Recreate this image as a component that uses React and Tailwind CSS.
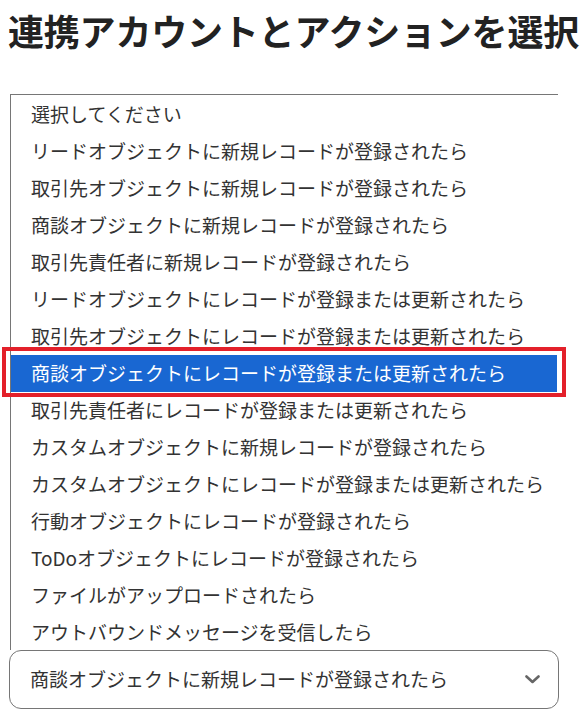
import React from 'react';

const options = [
  '選択してください',
  'リードオブジェクトに新規レコードが登録されたら',
  '取引先オブジェクトに新規レコードが登録されたら',
  '商談オブジェクトに新規レコードが登録されたら',
  '取引先責任者に新規レコードが登録されたら',
  'リードオブジェクトにレコードが登録または更新されたら',
  '取引先オブジェクトにレコードが登録または更新されたら',
  '商談オブジェクトにレコードが登録または更新されたら',
  '取引先責任者にレコードが登録または更新されたら',
  'カスタムオブジェクトに新規レコードが登録されたら',
  'カスタムオブジェクトにレコードが登録または更新されたら',
  '行動オブジェクトにレコードが登録されたら',
  'ToDoオブジェクトにレコードが登録されたら',
  'ファイルがアップロードされたら',
  'アウトバウンドメッセージを受信したら',
];

const SELECTED = 7;

const App = () => {
  return (
    <div
      className="relative w-[586px] h-[717px] bg-white overflow-hidden"
      style={{ fontFamily: '"Noto Sans CJK JP", "Noto Sans", sans-serif' }}
    >
      <h1 className="pl-[8px] pt-[11px] text-[36px] leading-[38px] font-bold text-[#222] whitespace-nowrap tracking-[-0.2px]">
        連携アカウントとアクションを選択
      </h1>

      <div className="mt-[45px] ml-[10px] w-[548px]">
        {/* open option list */}
        <div className="border-l border-t border-[#767676] pt-[1px] h-[556px]">
          {options.map((o, i) => (
            <div
              key={i}
              className={
                i === SELECTED
                  ? 'h-[37px] flex items-center pl-[20px] mr-[1px] bg-[#1967d2] text-white text-[19px] whitespace-nowrap'
                  : 'h-[37px] flex items-center pl-[20px] text-[#333] text-[19px] whitespace-nowrap'
              }
            >
              {o}
            </div>
          ))}
        </div>

        {/* closed select */}
        <div className="-ml-[1px] w-[550px] h-[59px] border border-[#767676] rounded-[12px] flex items-center justify-between pl-[20px] pr-[18px] text-[19px] text-[#333]">
          <span className="whitespace-nowrap">商談オブジェクトに新規レコードが登録されたら</span>
          <svg width="15" height="9" viewBox="0 0 15 9" fill="none">
            <path d="M1.5 1.5 L7.5 7 L13.5 1.5" stroke="#666" strokeWidth="2.6" strokeLinecap="round" strokeLinejoin="round" />
          </svg>
        </div>
      </div>

      {/* red highlight annotation over the selected option */}
      <div className="absolute left-[2px] top-[347px] w-[564px] h-[50px] border-4 border-[#e3202a] pointer-events-none" />
    </div>
  );
};

export default App;
